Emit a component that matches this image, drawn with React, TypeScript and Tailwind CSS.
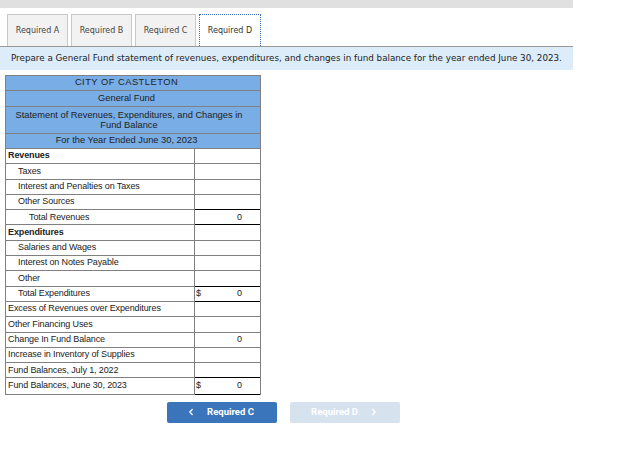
import { ChevronLeft, ChevronRight } from 'lucide-react';

type Row = {
  label: string;
  indent?: 0 | 1 | 2;
  bold?: boolean;
  dollar?: boolean;
  value?: string;
  strong?: boolean;
};

const rows: Row[] = [
  { label: 'Revenues', bold: true },
  { label: 'Taxes', indent: 1 },
  { label: 'Interest and Penalties on Taxes', indent: 1 },
  { label: 'Other Sources', indent: 1 },
  { label: 'Total Revenues', indent: 2, value: '0', strong: true },
  { label: 'Expenditures', bold: true },
  { label: 'Salaries and Wages', indent: 1 },
  { label: 'Interest on Notes Payable', indent: 1 },
  { label: 'Other', indent: 1 },
  { label: 'Total Expenditures', indent: 1, dollar: true, value: '0', strong: true },
  { label: 'Excess of Revenues over Expenditures' },
  { label: 'Other Financing Uses' },
  { label: 'Change In Fund Balance', value: '0' },
  { label: 'Increase in Inventory of Supplies' },
  { label: 'Fund Balances, July 1, 2022' },
  { label: 'Fund Balances, June 30, 2023', dollar: true, value: '0', strong: true },
];

const tabs = ['Required A', 'Required B', 'Required C', 'Required D'];

export default function App() {
  return (
    <div className="w-[631px] h-[464px] bg-white text-[#222]">
      <div className="w-[573px]">
        <div className="h-[8px] bg-[#e0e0e0]" />

        {/* tabs */}
        <div className="flex gap-[3px] pl-[7px] pt-[6px] font-['DejaVu_Sans',sans-serif] text-[8px]">
          {tabs.map((t, i) =>
            i === 3 ? (
              <div
                key={t}
                className="w-[62px] h-[32px] flex items-center justify-center bg-white border border-dotted border-[#3b6cc0] border-b-0 text-[#333]"
              >
                {t}
              </div>
            ) : (
              <div
                key={t}
                className="w-[61px] h-[32px] flex items-center justify-center bg-[#f2f2f2] border border-[#c8c8c8] border-b-0 text-[#444]"
              >
                {t}
              </div>
            )
          )}
        </div>

        {/* instructions */}
        <div className="h-[24px] border-t border-[#999] bg-[#dcecf9] pl-[11px] flex items-center font-['DejaVu_Sans',sans-serif] text-[8.75px] text-[#222]">
          Prepare a General Fund statement of revenues, expenditures, and changes in fund balance for the year ended June 30, 2023.
        </div>
      </div>

      {/* statement */}
      <div className="ml-[5px] mt-[5px] w-[256px] font-['Liberation_Sans',Arial,sans-serif] text-[9px]">
        <div className="border border-[#808080] bg-[#78ade6] text-center text-[9.3px]">
          <div className="h-[15px] flex items-center justify-center border-b border-[#808080] pr-[13px] tracking-[0.5px]">
            CITY OF CASTLETON
          </div>
          <div className="h-[16px] flex items-center justify-center border-b border-[#808080] pr-[13px]">
            General Fund
          </div>
          <div className="h-[27px] flex items-center justify-center border-b border-[#808080] leading-[10px] pl-[4px] pr-[12px]">
            Statement of Revenues, Expenditures, and Changes in Fund Balance
          </div>
          <div className="h-[14px] flex items-center justify-center pr-[13px]">For the Year Ended June 30, 2023</div>
        </div>
        <div className="border border-t-0 border-[#808080] tracking-[-0.12px]">
          {rows.map((r, i) => (
            <div key={i} className="flex h-[15.3px] border-b border-[#808080] last:border-b-0">
              <div
                className={`w-[189px] flex items-center border-r border-[#808080] ${
                  r.indent === 2 ? 'pl-[23px]' : r.indent === 1 ? 'pl-[12px]' : 'pl-[2px]'
                } ${r.bold ? 'font-bold' : ''}`}
              >
                {r.label}
              </div>
              <div
                className={`flex-1 flex items-center justify-between pl-[1px] pr-[18px] ${
                  r.strong ? 'border-y border-black -my-px' : ''
                }`}
              >
                <span>{r.dollar ? '$' : ''}</span>
                <span>{r.value ?? ''}</span>
              </div>
            </div>
          ))}
        </div>
      </div>

      {/* nav buttons */}
      <div className="flex gap-[13px] pl-[167px] mt-[7px] font-['Roboto',sans-serif] font-bold text-[9.5px]">
        <div className="w-[110px] h-[21px] rounded-[2px] bg-[#3a75bb] text-white flex items-center justify-center gap-[11px] pr-[4px]">
          <ChevronLeft size={10} strokeWidth={3} />
          Required C
        </div>
        <div className="w-[110px] h-[21px] rounded-[2px] bg-[#d7e2ef] text-white flex items-center justify-center gap-[11px]">
          Required D
          <ChevronRight size={10} strokeWidth={3} />
        </div>
      </div>
    </div>
  );
}
